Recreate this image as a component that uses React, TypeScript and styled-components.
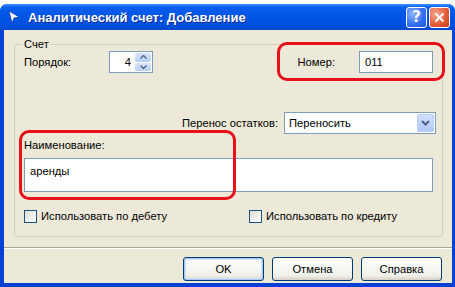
import styled, { createGlobalStyle } from 'styled-components'

const GlobalStyle = createGlobalStyle`
  html, body { margin: 0; padding: 0; background: #fff; }
  body {
    font-family: 'Liberation Sans', Arial, sans-serif;
    font-size: 11.2px;
    color: #000;
  }
`

const Window = styled.div`
  position: relative;
  margin-top: 4px;
  width: 455px;
  height: 283px;
  box-sizing: border-box;
  padding: 0 3px 4px 4px;
  background: #0842d4;
  border-radius: 7px 7px 0 0;
  display: flex;
  flex-direction: column;
`

const TitleBar = styled.div`
  height: 26px;
  margin: 0 -3px 0 -4px;
  padding: 0 5px 0 8px;
  border-radius: 7px 7px 0 0;
  background: linear-gradient(#3d95ff 0%, #0a5fee 12%, #0054e6 50%, #0050e0 85%, #0a46c8 100%);
  display: flex;
  align-items: center;
`

const TitleText = styled.span`
  flex: 1;
  margin-left: 8px;
  color: #fff;
  font-weight: bold;
  font-size: 13px;
  text-shadow: 1px 1px 0 #0a2a90;
`

const CaptionButton = styled.div<{ $close?: boolean }>`
  width: 19px;
  height: 19px;
  margin-left: 2px;
  border: 1px solid #fff;
  border-radius: 3px;
  background: ${(p) =>
    p.$close
      ? 'radial-gradient(circle at 30% 30%, #f6a58c, #e35a35 60%, #c43a18)'
      : 'radial-gradient(circle at 30% 30%, #8fb2ff, #2f6ef0 60%, #1f55d8)'};
  color: #fff;
  display: flex;
  align-items: center;
  justify-content: center;
  font-family: 'DejaVu Sans', sans-serif;
  font-weight: bold;
  font-size: 15px;
`

const Client = styled.div`
  flex: 1;
  background: #ece9d8;
  padding: 7px 9px 0 10px;
  display: flex;
  flex-direction: column;
`

const GroupBox = styled.fieldset`
  margin: 0;
  padding: 0 9px 13px 9px;
  border: 1px solid #d0d0bf;
  border-radius: 3px;
`

const Legend = styled.legend`
  margin-left: -2px;
  padding: 0 2px;
  line-height: 14px;
`

const Row = styled.div<{ $top?: number; $end?: boolean }>`
  display: flex;
  align-items: center;
  height: 22px;
  margin-top: ${(p) => p.$top ?? 0}px;
  justify-content: ${(p) => (p.$end ? 'flex-end' : 'flex-start')};
`

const Label = styled.span<{ $width?: number }>`
  width: ${(p) => (p.$width ? `${p.$width}px` : 'auto')};
  white-space: nowrap;
`

const Spinner = styled.div`
  width: 44px;
  height: 22px;
  box-sizing: border-box;
  border: 1px solid #7f9db9;
  background: #fff;
  display: flex;
  padding: 1px;
`

const SpinValue = styled.span`
  flex: 1;
  text-align: right;
  padding-right: 4px;
  line-height: 18px;
`

const SpinButtons = styled.div`
  width: 16px;
  display: flex;
  flex-direction: column;
  gap: 1px;
`

const SpinButton = styled.div`
  flex: 1;
  background: linear-gradient(#d9e5fd, #b8cdf7);
  border-radius: 2px;
  display: flex;
  align-items: center;
  justify-content: center;
`

const Spacer = styled.div`
  flex: 1;
`

const TextBox = styled.div<{ $width?: number }>`
  width: ${(p) => (p.$width ? `${p.$width}px` : 'auto')};
  height: 22px;
  box-sizing: border-box;
  border: 1px solid #7f9db9;
  background: #fff;
  padding: 0 5px;
  line-height: 20px;
`

const Combo = styled.div`
  width: 152px;
  height: 22px;
  margin-left: 6px;
  margin-right: -3px;
  box-sizing: border-box;
  border: 1px solid #7f9db9;
  background: #fff;
  display: flex;
  padding: 1px;
`

const ComboValue = styled.span`
  flex: 1;
  padding-left: 3px;
  line-height: 18px;
`

const ComboButton = styled.div`
  width: 17px;
  border-radius: 2px;
  background: linear-gradient(#d2e0fd, #b0c8f6);
  border: 1px solid #bacdf5;
  box-sizing: border-box;
  display: flex;
  align-items: center;
  justify-content: center;
`

const FieldLabel = styled.div`
  margin-top: 4px;
  line-height: 14px;
`

const TextArea = styled.div`
  margin-top: 6px;
  height: 34px;
  box-sizing: border-box;
  border: 1px solid #7f9db9;
  background: #fff;
  padding: 5px 5px;
  line-height: 14px;
`

const Checks = styled.div`
  margin-top: 18px;
  display: grid;
  grid-template-columns: 225px 1fr;
`

const CheckItem = styled.label`
  display: flex;
  align-items: center;
  gap: 4px;
  line-height: 13px;
`

const CheckBox = styled.span`
  width: 13px;
  height: 13px;
  box-sizing: border-box;
  border: 1px solid #1c5180;
  background: linear-gradient(135deg, #dcdcd7, #fff);
`

const Separator = styled.div`
  margin: 10px -9px 0 -10px;
  border-top: 1px solid #aca899;
  border-bottom: 1px solid #fff;
`

const Buttons = styled.div`
  margin-top: 8px;
  display: flex;
  justify-content: flex-end;
  gap: 8px;
  padding-right: 1px;
`

const Button = styled.div<{ $default?: boolean }>`
  width: 81px;
  height: 24px;
  box-sizing: border-box;
  border: 1px solid #003c74;
  border-radius: 3px;
  background: linear-gradient(#fff, #f0f0ea 80%, #d6d0c5);
  box-shadow: ${(p) => (p.$default ? 'inset 0 0 0 1px #aac6f3, inset 0 0 0 2px #cfe0fb' : 'none')};
  display: flex;
  align-items: center;
  justify-content: center;
`

const Highlight = styled.div`
  position: absolute;
  border: 3px solid #e8101a;
  border-radius: 10px;
  box-sizing: border-box;
  pointer-events: none;
`

const Arrow = ({ up }: { up?: boolean }) => (
  <svg width="7" height="4" viewBox="0 0 7 4">
    <path d={up ? 'M0.5 3.5 L3.5 0.5 L6.5 3.5' : 'M0.5 0.5 L3.5 3.5 L6.5 0.5'} fill="none" stroke="#4d6185" strokeWidth="1.3" />
  </svg>
)

export default function App() {
  return (
    <>
      <GlobalStyle />
      <Window>
        <TitleBar>
          <svg width="12" height="14" viewBox="0 0 12 14">
            <path d="M1 1 L11 7 L6 8 L4 13 Z" fill="#fff" stroke="#1a3fa8" strokeWidth="0.8" />
          </svg>
          <TitleText>Аналитический счет: Добавление</TitleText>
          <CaptionButton>?</CaptionButton>
          <CaptionButton $close>
            <svg width="11" height="11" viewBox="0 0 11 11">
              <path d="M1.5 1.5 L9.5 9.5 M9.5 1.5 L1.5 9.5" stroke="#fff" strokeWidth="2" />
            </svg>
          </CaptionButton>
        </TitleBar>
        <Client>
          <GroupBox>
            <Legend>Счет</Legend>
            <Row>
              <Label $width={85}>Порядок:</Label>
              <Spinner>
                <SpinValue>4</SpinValue>
                <SpinButtons>
                  <SpinButton><Arrow up /></SpinButton>
                  <SpinButton><Arrow /></SpinButton>
                </SpinButtons>
              </Spinner>
              <Spacer />
              <Label>Номер:</Label>
              <TextBox $width={74} style={{ marginLeft: 24 }}>011</TextBox>
            </Row>
            <Row $top={39} $end>
              <Label>Перенос остатков:</Label>
              <Combo>
                <ComboValue>Переносить</ComboValue>
                <ComboButton>
                  <svg width="9" height="6" viewBox="0 0 9 6">
                    <path d="M1 1 L4.5 4.5 L8 1" fill="none" stroke="#4d6185" strokeWidth="2" />
                  </svg>
                </ComboButton>
              </Combo>
            </Row>
            <FieldLabel>Наименование:</FieldLabel>
            <TextArea>аренды</TextArea>
            <Checks>
              <CheckItem><CheckBox />Использовать по дебету</CheckItem>
              <CheckItem><CheckBox />Использовать по кредиту</CheckItem>
            </Checks>
          </GroupBox>
          <Separator />
          <Buttons>
            <Button $default>OK</Button>
            <Button>Отмена</Button>
            <Button>Справка</Button>
          </Buttons>
        </Client>
        <Highlight style={{ left: 277, top: 38, width: 168, height: 39 }} />
        <Highlight style={{ left: 19, top: 126, width: 217, height: 70 }} />
      </Window>
    </>
  )
}
